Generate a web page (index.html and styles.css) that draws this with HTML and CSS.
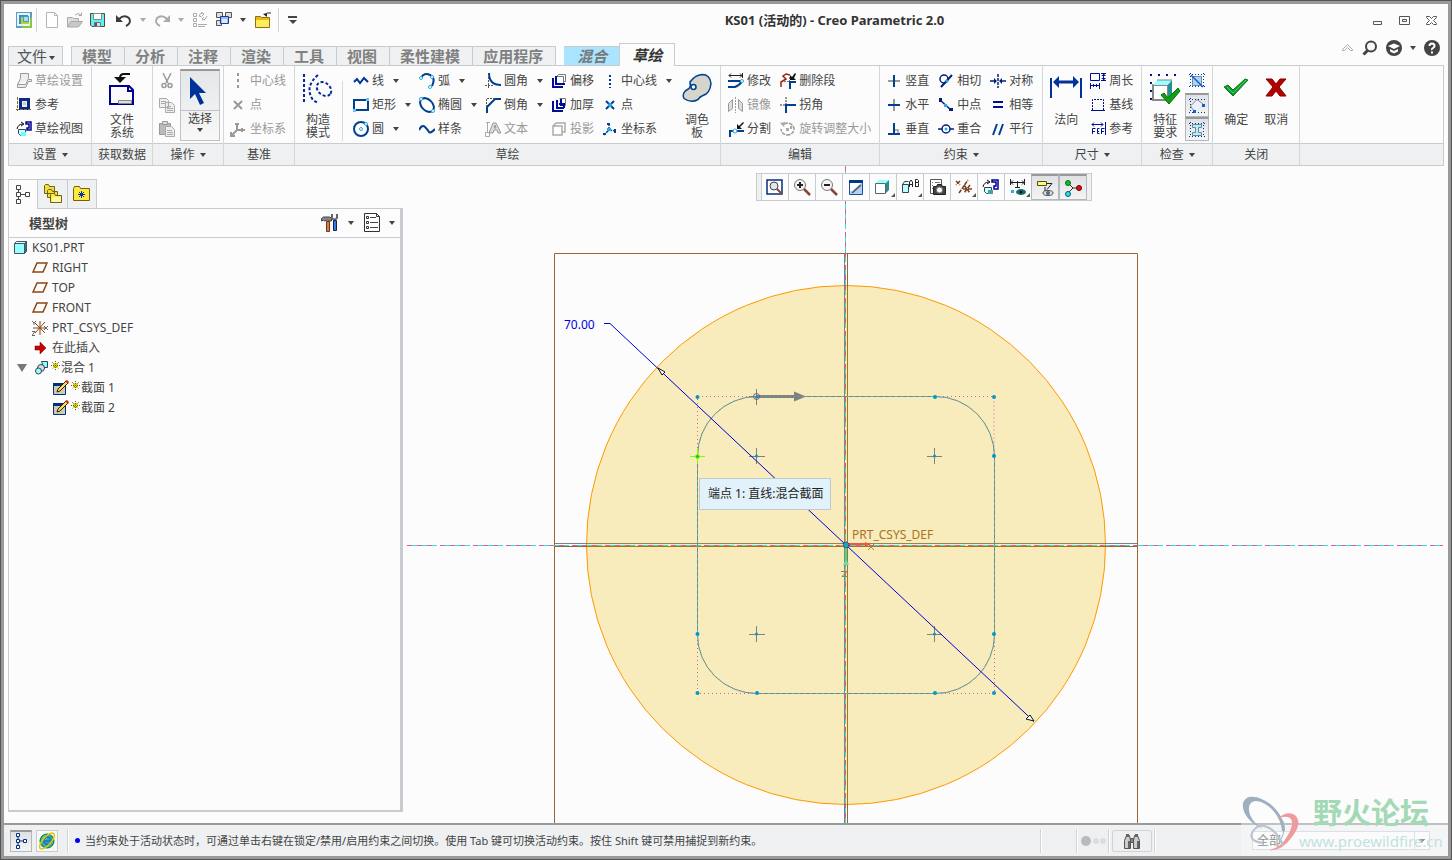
FILE: index.html
```html
<!DOCTYPE html>
<html lang="zh-CN">
<head>
<meta charset="utf-8">
<title>KS01 (活动的) - Creo Parametric 2.0</title>
<link rel="stylesheet" href="styles.css">
</head>
<body>
<div class="window">
  <header class="titlebar">
    <div class="quick">
      <svg class="i16" viewBox="0 0 16 16"><path fill="#5b9ac9" d="M0 0h16v11L11 16H0z"/><path fill="#8fc63f" d="M5 16L16 5v11z"/><path fill="#e6f3f8" d="M1 1h13v13H1z"/><path fill="#3c8dc0" d="M3 3h9v2H5v7H3z"/><path fill="#b5d335" d="M5 5h8v7H5z"/><path fill="#4b9ac0" d="M7 4h6v6H7z"/><path fill="#a9dcea" d="M8 5h4v4H8z"/></svg>
      <i class="vsep"></i>
      <button class="q1" aria-label="新建"><svg class="i16" viewBox="0 0 16 16"><path fill="#fff" stroke="#b5b5b5" d="M2.500 .5h8l3 3v12h-11zM10.500 .5v3h3"/></svg></button>
      <button class="q2" aria-label="打开"><svg class="i16" viewBox="0 0 16 16"><path fill="#ddd" stroke="#aaa" d="M.5 15V5.500h5l1 1h5v3"/><path fill="#c8c8c8" stroke="#aaa" d="M.5 15L4 9.500h11.500L11.500 15z"/><path fill="none" stroke="#aaa" d="M8 3q3-3 6 0M14.500 .5v3h-3"/></svg></button>
      <button class="q2" aria-label="保存"><svg class="i16" viewBox="0 0 16 16"><path fill="#5ef3f3" stroke="#4a4a4a" d="M.5 1.500h14v13H2l-1.500-1.500z"/><path fill="#fcfcfc" stroke="#888" d="M3.500 1.500h8v6h-8z"/><path fill="#ddd" stroke="#777" d="M4.500 10.500h6v4h-6z"/><path fill="#555" d="M5 11h2v3H5z"/></svg></button>
      <button class="q3" aria-label="撤消"><svg class="i16" viewBox="0 0 16 16"><path fill="none" stroke="#3c3c3c" stroke-width="2" d="M3 7q5-5 10-1q3 5-3 8"/><path fill="#3c3c3c" d="M0 3v7h7z"/></svg></button>
      <button class="drop light" aria-label="撤消列表"></button>
      <button class="q4" aria-label="重做"><svg class="i16" viewBox="0 0 16 16"><path fill="none" stroke="#aaa" stroke-width="2" d="M13 7q-5-5-10-1q-3 5 3 8"/><path fill="#aaa" d="M16 3v7H9z"/></svg></button>
      <button class="drop light" aria-label="重做列表"></button>
      <button class="q5" aria-label="重新生成"><svg class="i16" viewBox="0 0 16 16"><path fill="none" stroke="#aaa" d="M.5 1.500h3v3h-3zM.5 6.500h3v3h-3zM.5 11.500h3v3h-3zM5 12.500h9M5 14.500h7M6 4q1-3 4-3M14 4q-1 4-5 4M9 5l-3-1M8 0l3 2-2 2M12 8l-3-1 2-2"/></svg></button>
      <button class="q2" aria-label="窗口"><svg class="i16" viewBox="0 0 16 16"><path fill="#ddd" stroke="#555" d="M.5 .5h6v5h-6zM9.500 .5h6v5h-6zM.5 8.500h5v5h-5z"/><path fill="#9cb9ef" stroke="#143c9c" d="M4.500 4.500h8v7h-8z"/><path fill="#dfeaff" d="M6 7h5v4H6z"/></svg></button>
      <button class="drop dk" aria-label="窗口列表"></button>
      <button class="q5" aria-label="关闭窗口"><svg class="i16" viewBox="0 0 16 16"><path fill="#e8ba19" stroke="#887314" d="M.5 15.500V4.500h5l1 1h8v10z"/><path fill="#ffec5a" d="M1 8h13v7H1z"/><path fill="none" stroke="#222" d="M10 3q2-3 6-2"/><path fill="#222" d="M8 2l4-1v4z"/></svg></button>
      <i class="vsep q2"></i>
      <button class="custom" aria-label="自定义快速访问工具栏"></button>
    </div>
    <h1 class="title">KS01 (活动的) - Creo Parametric 2.0</h1>
    <div class="winbtns">
      <button aria-label="最小化"><svg width="11" height="11"><path fill="none" stroke="#555" d="M1.500 6.500h8v3h-8z"/></svg></button>
      <button aria-label="还原"><svg width="11" height="11"><path fill="none" stroke="#555" d="M.5 1.500h10v8h-10zM3.500 4.500h4v2h-4z"/></svg></button>
      <button aria-label="关闭"><svg width="11" height="11"><path fill="#fff" stroke="#555" d="M.5 1.500h3l2 2 2-2h3v1l-3 3 3 3v1h-3l-2-2-2 2h-3v-1l3-3-3-3z"/></svg></button>
    </div>
  </header>

  <nav class="tabs">
    <button class="tab file">文件<span class="tri"></span></button>
    <div class="tabset"><button class="tab">模型</button><button class="tab">分析</button><button class="tab">注释</button><button class="tab">渲染</button><button class="tab">工具</button><button class="tab">视图</button><button class="tab">柔性建模</button><button class="tab">应用程序</button></div>
    <button class="tab ctx">混合</button><button class="tab active">草绘</button>
    <div class="help">
      <button aria-label="最小化功能区"><svg width="12" height="8"><path fill="none" stroke="#aaa" d="M.5 5.500l5-5 5 5v1h-2l-3-3-3 3h-2z"/></svg></button>
      <button aria-label="搜索"><svg width="16" height="16"><circle cx="9" cy="6.500" r="5" fill="#f4fafc" stroke="#444" stroke-width="2"/><path stroke="#444" stroke-width="3" d="M5.500 10.500L1.500 14.500"/></svg></button>
      <button aria-label="学习"><svg width="16" height="16"><circle cx="8" cy="8" r="8" fill="#444"/><path fill="#fff" d="M2 6l6-2.500L14 6 8 9z"/><path fill="#fff" d="M4 9l4 2 4-2v2.500l-4 2-4-2z"/></svg></button>
      <button class="drop" aria-label="学习列表"></button>
      <button aria-label="帮助"><svg width="16" height="16"><circle cx="8" cy="8" r="8" fill="#444"/><path fill="none" stroke="#fff" stroke-width="2" d="M5.500 6q0-2.500 2.500-2.500T10.500 6Q10.500 7 9 8t-1 2M8 11.500v2"/></svg></button>
    </div>
  </nav>

  <section class="ribbon">
    <div class="group setup">
      <div class="body">
        <div class="col">
          <button class="cmd" disabled><svg class="i16" viewBox="0 0 16 16"><path fill="#eee" stroke="#999" d="M4.500 .5h8v5l-3 6h-8l3-6zM1.500 11.500v3h8l3-6h3v-2h-3"/></svg>草绘设置</button>
          <button class="cmd"><svg class="i16" viewBox="0 0 16 16"><path fill="#0c2a80" d="M3 1h11v12H3z"/><path fill="#eef" d="M6 4h5v6H6z"/><path fill="#b8d8d0" d="M7 5h3v3H7z"/><path stroke="#77713f" stroke-dasharray="3 1" d="M1.500 0v14M0 12.500h15"/></svg>参考</button>
          <button class="cmd"><svg class="i16" viewBox="0 0 16 16"><path fill="#c9ffff" stroke="#345" d="M2.500 8.500h7v6h-5l-2-2z"/><path fill="#6ff" d="M5 11h5v4H5z"/><path fill="none" stroke="#111" d="M1 8Q2 3 7 3M5 1l3 2-3 2"/><path fill="none" stroke="#000090" stroke-width="1.500" d="M10 1h5v8h-4V7h2V3h-3z"/></svg>草绘视图</button>
        </div>
      </div>
      <button class="gname">设置<span class="tri"></span></button>
    </div>
    <div class="group data">
      <div class="body">
        <button class="big"><svg width="28" height="34" viewBox="0 0 28 34"><path fill="none" stroke="#111" stroke-width="2" d="M22 2h-6q-4 0-4 4"/><path fill="#111" d="M6 5h12l-6 6z"/><path fill="#fafafa" stroke="#000090" stroke-width="2" d="M2 14h19l4 4v14H2zM20 14v5h5"/><path fill="#ddd" stroke="#888" d="M10.500 28.500h13v3h-13z"/></svg><span>文件<br>系统</span></button>
      </div>
      <div class="gname">获取数据</div>
    </div>
    <div class="group ops">
      <div class="body">
        <div class="col">
          <button class="cmd" disabled aria-label="剪切"><svg class="i16" viewBox="0 0 16 16"><path fill="none" stroke="#999" stroke-width="1.500" d="M4 0l5 10M12 0L7 10"/><circle cx="5" cy="12.500" r="2" fill="none" stroke="#999" stroke-width="1.500"/><circle cx="11" cy="12.500" r="2" fill="none" stroke="#999" stroke-width="1.500"/></svg></button>
          <button class="cmd" disabled aria-label="复制"><svg class="i16" viewBox="0 0 16 16"><path fill="#eee" stroke="#aaa" d="M.5 1.500h7l2 2v7h-9zM6.500 5.500h6l3 3v7h-9z"/><path stroke="#aaa" d="M2 4.500h5M2 6.500h4M8 9.500h4M8 11.500h6M8 13.500h6"/></svg></button>
          <button class="cmd" disabled aria-label="粘贴"><svg class="i16" viewBox="0 0 16 16"><path fill="#bbb" stroke="#999" d="M.5 2.500h11v11h-11z"/><path fill="#ddd" stroke="#999" d="M3.500 .5h5v3h-5z"/><path fill="#eee" stroke="#aaa" d="M6.500 5.500h6l3 3v7h-9z"/><path stroke="#aaa" d="M8 9.500h5M8 11.500h6M8 13.500h6"/></svg></button>
        </div>
        <div class="split"><button class="pick" aria-label="选择"><svg width="20" height="32" viewBox="0 0 20 32"><path fill="#003399" d="M2 2v22l5-5 5 11 4-2-5-10h7z"/></svg></button><button class="pickname">选择<span class="tri"></span></button></div>
      </div>
      <button class="gname">操作<span class="tri"></span></button>
    </div>
    <div class="group datum">
      <div class="body">
        <div class="col">
          <button class="cmd wide" disabled><svg class="i16" viewBox="0 0 16 16"><path stroke="#999" stroke-width="2" stroke-dasharray="3 3" d="M8 0v16"/></svg>中心线</button>
          <button class="cmd wide" disabled><svg class="i16" viewBox="0 0 16 16"><path stroke="#999" stroke-width="2" d="M4 4l8 8M12 4l-8 8"/></svg>点</button>
          <button class="cmd wide" disabled><svg class="i16" viewBox="0 0 16 16"><path fill="none" stroke="#999" stroke-width="2" d="M7 2v7l-6 6M7 9h8M5 3h4M12 7v4M1 11v4h4"/></svg>坐标系</button>
        </div>
      </div>
      <div class="gname">基准</div>
    </div>
    <div class="group sketch">
      <div class="body">
        <button class="big"><svg width="32" height="32" viewBox="0 0 32 32"><g fill="none" stroke="#002b98" stroke-width="2" stroke-dasharray="3 2"><path d="M2 1v30"/><path d="M16 2Q2 14 11 27l5 3"/><ellipse cx="22" cy="16" rx="8" ry="6" transform="rotate(40 22 16)"/></g></svg><span>构造<br>模式</span></button>
        <i class="bsep"></i>
        <div class="col">
          <div class="row"><button class="cmd"><svg class="i16" viewBox="0 0 16 16"><path fill="none" stroke="#003399" stroke-width="2" d="M1 9l3-3 3 4 4-5 4 4"/></svg>线</button><button class="drop" aria-label="线列表"></button></div>
          <div class="row"><button class="cmd"><svg class="i16" viewBox="0 0 16 16"><path fill="#fff" stroke="#003f92" stroke-width="2" d="M1 3h14v10H1z"/><path fill="#5fc8f5" d="M13 1h3v3h-3zM0 12h3v3H0z"/></svg>矩形</button><button class="drop" aria-label="矩形列表"></button></div>
          <div class="row"><button class="cmd"><svg class="i16" viewBox="0 0 16 16"><circle cx="8" cy="8" r="7" fill="#fff" stroke="#003f92" stroke-width="2"/><circle cx="8" cy="8" r="1.500" fill="none" stroke="#29abe2"/><circle cx="13" cy="3" r="1.500" fill="#fff" stroke="#29abe2"/></svg>圆</button><button class="drop" aria-label="圆列表"></button></div>
        </div>
        <div class="col">
          <div class="row"><button class="cmd"><svg class="i16" viewBox="0 0 16 16"><path fill="none" stroke="#003f92" stroke-width="2" d="M2 5Q5 -1 11 2t2 11"/><g fill="#fff" stroke="#29abe2"><circle cx="2" cy="5" r="1.500"/><circle cx="13" cy="4" r="1.500"/><circle cx="11" cy="14" r="1.500"/></g></svg>弧</button><button class="drop" aria-label="弧列表"></button></div>
          <div class="row"><button class="cmd"><svg class="i16" viewBox="0 0 16 16"><ellipse cx="8" cy="8" rx="8" ry="5.500" transform="rotate(45 8 8)" fill="#fff" stroke="#003f92" stroke-width="2"/><g fill="#fff" stroke="#29abe2"><circle cx="2" cy="2" r="1.500"/><circle cx="14" cy="14" r="1.500"/></g></svg>椭圆</button><button class="drop" aria-label="椭圆列表"></button></div>
          <div class="row"><button class="cmd"><svg class="i16" viewBox="0 0 16 16"><path fill="none" stroke="#003f92" stroke-width="2" d="M0 9q3-6 6-3t4 5 6-3"/></svg>样条</button></div>
        </div>
        <div class="col">
          <div class="row"><button class="cmd"><svg class="i16" viewBox="0 0 16 16"><path fill="none" stroke="#003f92" stroke-width="2" d="M4 0Q4 12 16 12"/><path fill="none" stroke="#555" stroke-dasharray="2 1" d="M3.500 4v12M0 12.500h8"/></svg>圆角</button><button class="drop" aria-label="圆角列表"></button></div>
          <div class="row"><button class="cmd"><svg class="i16" viewBox="0 0 16 16"><path fill="none" stroke="#003f92" stroke-width="2" d="M2 16V10L10 2h6"/><path fill="none" stroke="#555" stroke-dasharray="2 1" d="M1.500 10V1.500H10"/></svg>倒角</button><button class="drop" aria-label="倒角列表"></button></div>
          <div class="row"><button class="cmd" disabled><svg class="i16" viewBox="0 0 16 16"><path fill="none" stroke="#aaa" d="M2.500 1v10M1 1.500h4M.5 11.500h4v4h-4z"/><path fill="#ddd" stroke="#999" d="M4 12l4-10h3l5 10h-3l-1-3H9l-1 3zM9 7h2l-1-3z"/></svg>文本</button></div>
        </div>
        <div class="col">
          <button class="cmd"><svg class="i16" viewBox="0 0 16 16"><path fill="none" stroke="#777" d="M5.500 3.500h7v7h-7zM7.500 1.500h7v7h-2M5.500 3.500l2-2"/><path fill="none" stroke="#000e94" stroke-width="2" d="M2 5v9h10M5 3v8h9"/></svg>偏移</button>
          <button class="cmd"><svg class="i16" viewBox="0 0 16 16"><path fill="none" stroke="#777" d="M8.500 1.500h6v7h-2"/><path fill="none" stroke="#000e94" stroke-width="2" d="M2 4v10h10M6 3v8h7M10 2v6h4M8 7h5v4"/></svg>加厚</button>
          <button class="cmd" disabled><svg class="i16" viewBox="0 0 16 16"><path fill="#fff" stroke="#aaa" stroke-width="1.500" d="M2 5h9v9H2zM5 2h9v9h-3M2 5l3-3"/></svg>投影</button>
        </div>
        <div class="col">
          <div class="row"><button class="cmd"><svg class="i16" viewBox="0 0 16 16"><path stroke="#003399" stroke-width="2" stroke-dasharray="2 2" d="M8 2v13"/></svg>中心线</button><button class="drop" aria-label="中心线列表"></button></div>
          <button class="cmd"><svg class="i16" viewBox="0 0 16 16"><path stroke="#003f92" stroke-width="2" d="M4 4l8 8M12 4l-8 8"/><circle cx="8" cy="8" r="2" fill="#29abe2"/></svg>点</button>
          <button class="cmd"><svg class="i16" viewBox="0 0 16 16"><path fill="none" stroke="#003f92" stroke-width="1.500" stroke-dasharray="3 1" d="M7 2v7l-5 5M7 9l7 1"/><path fill="#29abe2" d="M5 7h4v3H5z"/><path fill="#003f92" d="M5 2h3v2H5zM12 8h2v4h-2zM1 12h3v2H1z"/></svg>坐标系</button>
        </div>
        <button class="big palette"><svg width="32" height="32" viewBox="0 0 32 32"><path fill="#d6d5cb" stroke="#003f92" stroke-width="1.500" d="M9 9Q14 2 21 1.500q8 0 9 9-1 10-8 12-3 1-5 4-7 4-14-1-3-6 5-10 2-2 1-6z"/><circle cx="12.500" cy="14" r="2.500" fill="#fff" stroke="#003f92" stroke-width="1.500"/></svg><span>调色<br>板</span></button>
      </div>
      <div class="gname">草绘</div>
    </div>
    <div class="group edit">
      <div class="body">
        <div class="col">
          <button class="cmd"><svg class="i16" viewBox="0 0 16 16"><path fill="none" stroke="#222" d="M1 2.500h13M3 .5L1 2.500l2 2M14.500 0v5M12 .5l2 2-2 2"/><path fill="none" stroke="#003f92" stroke-width="2" d="M0 8h14M0 14h7q5-2 7-6"/><circle cx="14" cy="8" r="1.500" fill="#fff" stroke="#29abe2"/></svg>修改</button>
          <button class="cmd" disabled><svg class="i16" viewBox="0 0 16 16"><path fill="#ddd" stroke="#999" d="M.5 14.500V6.500l4-4v9zM14.500 14.500V6.500l-4-4v9z"/><path stroke="#999" stroke-dasharray="2 1" d="M7.500 0v16"/></svg>镜像</button>
          <button class="cmd"><svg class="i16" viewBox="0 0 16 16"><path fill="none" stroke="#003f92" stroke-width="2" d="M2 16V10h14"/><circle cx="7" cy="10" r="2" fill="#fff" stroke="#29abe2"/><path fill="#111" d="M9 8V3l2 2 4-4 1 1-4 4 2 2z"/></svg>分割</button>
        </div>
        <div class="col">
          <button class="cmd"><svg class="i16" viewBox="0 0 16 16"><path fill="none" stroke="#a02010" stroke-width="1.500" d="M1 14V9l5-3L3 3l3-2 4 1"/><path fill="none" stroke="#777" stroke-dasharray="2 1" d="M4 8.500h5M9.500 4v5"/><path fill="none" stroke="#003f92" stroke-width="2" d="M10 16V9h6"/><path fill="#111" d="M10 7V2l2 2 3-4 1 1-2 4 2 2z"/></svg>删除段</button>
          <button class="cmd"><svg class="i16" viewBox="0 0 16 16"><path fill="none" stroke="#777" stroke-dasharray="2 1" stroke-width="1.500" d="M0 8h6M6 0v8"/><path fill="none" stroke="#003f92" stroke-width="2" d="M6 16V8h10"/></svg>拐角</button>
          <button class="cmd" disabled><svg class="i16" viewBox="0 0 16 16"><path fill="none" stroke="#999" stroke-width="1.500" stroke-dasharray="4 1" d="M4 3q7-3 10 4 0 6-6 7-6 0-7-6"/><path fill="#aaa" d="M0 2l5-1-1 5zM6 7h3v3H6zM10 5h2v3h-2z"/></svg>旋转调整大小</button>
        </div>
      </div>
      <div class="gname">编辑</div>
    </div>
    <div class="group cons">
      <div class="body">
        <div class="col">
          <button class="cmd"><svg class="i16" viewBox="0 0 16 16"><path stroke="#999" stroke-width="2" d="M2 8h12"/><path stroke="#003f92" stroke-width="2" d="M8 2v12"/></svg>竖直</button>
          <button class="cmd"><svg class="i16" viewBox="0 0 16 16"><path stroke="#999" stroke-width="2" d="M8 2v12"/><path stroke="#003f92" stroke-width="2" d="M2 8h12"/></svg>水平</button>
          <button class="cmd"><svg class="i16" viewBox="0 0 16 16"><path fill="none" stroke="#999" stroke-width="1.500" d="M8 9h4v4"/><path stroke="#003f92" stroke-width="2" d="M2 13h12M8 2v11"/></svg>垂直</button>
        </div>
        <div class="col">
          <button class="cmd"><svg class="i16" viewBox="0 0 16 16"><circle cx="6" cy="6" r="4" fill="#fff" stroke="#001f7c" stroke-width="1.500"/><path stroke="#001f7c" stroke-width="2" d="M14 2L3 14"/><circle cx="9" cy="8" r="1.500" fill="#29abe2"/></svg>相切</button>
          <button class="cmd"><svg class="i16" viewBox="0 0 16 16"><path stroke="#001f7c" stroke-width="1.500" d="M2 3l11 10"/><path fill="#001f7c" d="M1 1h3v4H1zM11 11h4v3h-4z"/><path fill="#29abe2" d="M6 7h3v3H6z"/></svg>中点</button>
          <button class="cmd"><svg class="i16" viewBox="0 0 16 16"><path stroke="#001f7c" stroke-width="1.500" d="M0 8h16"/><circle cx="8" cy="8" r="4" fill="#fff" stroke="#001f7c" stroke-width="1.500"/><circle cx="8" cy="8" r="1.500" fill="#29abe2"/></svg>重合</button>
        </div>
        <div class="col">
          <button class="cmd"><svg class="i16" viewBox="0 0 16 16"><path stroke="#001f7c" stroke-width="1.500" stroke-dasharray="3 1" d="M8 1v14"/><path stroke="#001f7c" stroke-width="1.500" d="M0 8h6M10 8h6"/><path fill="#001f7c" d="M4 5l3 3-3 3zM12 5L9 8l3 3z"/></svg>对称</button>
          <button class="cmd"><svg class="i16" viewBox="0 0 16 16"><path stroke="#000e94" stroke-width="2" d="M3 5h10M3 10h10"/></svg>相等</button>
          <button class="cmd"><svg class="i16" viewBox="0 0 16 16"><path stroke="#003f92" stroke-width="2" d="M7 3L3 14M13 3L9 14"/></svg>平行</button>
        </div>
      </div>
      <button class="gname">约束<span class="tri"></span></button>
    </div>
    <div class="group dims">
      <div class="body">
        <button class="big"><svg width="32" height="32" viewBox="0 0 32 32"><path stroke="#003399" stroke-width="2" d="M1 5v20M31 5v20"/><path stroke="#003399" stroke-width="3" d="M6 9h20"/><path fill="#003399" d="M3 9l6-6v12zM29 9l-6-6v12z"/></svg><span>法向</span></button>
        <div class="col">
          <button class="cmd"><svg class="i16" viewBox="0 0 16 16"><path fill="none" stroke="#000e94" d="M.5 .5h9v7h-9zM.5 10v6M9.500 10v6M1 12.500h8M3.500 11v3M6.500 11v3M11 .5h5M11 7.500h5M13.500 1v6"/><path fill="#000e94" d="M11 3h5l-2-2zM11 5h5l-2 2z"/></svg>周长</button>
          <button class="cmd"><svg class="i16" viewBox="0 0 16 16"><path fill="none" stroke="#000e94" stroke-dasharray="2 1" d="M2.500 13V2.500h11V13"/><path stroke="#000e94" d="M1 13.500h14"/></svg>基线</button>
          <button class="cmd"><svg class="i16" viewBox="0 0 16 16"><path fill="none" stroke="#000e94" d="M2 3.500h11M4 1.500l-2 2 2 2M11 1.500l2 2-2 2M15.500 1v13M2.500 13V7.500h3M2 10.500h3M9.500 7.500h-2v5h2M7 10.500h2M11.500 13V7.500h3M11 10.500h3"/></svg>参考</button>
        </div>
      </div>
      <button class="gname">尺寸<span class="tri"></span></button>
    </div>
    <div class="group inspect">
      <div class="body">
        <button class="big"><svg width="32" height="32" viewBox="0 0 32 32"><path stroke="#000e94" stroke-width="2" stroke-dasharray="2 6" d="M1 2h30M2 9v22"/><path fill="#fff" stroke="#888" stroke-width="2" d="M4 12h15v15H4z"/><path fill="#9ff" d="M4 12l4-5h15l-4 5z"/><path fill="#288f8f" d="M19 12l4-5v14l-4 5z"/><path fill="none" stroke="#888" d="M8 7h15"/><path fill="#0da010" stroke="#087008" d="M12 22l3-2 4 5 10-10 2 3-11 13z"/></svg><span>特征<br>要求</span></button>
        <div class="toggles">
          <button aria-label="着色封闭环"><svg class="i16" viewBox="0 0 16 16"><path stroke="#003399" stroke-dasharray="1 2" d="M0 1.500h16M0 13.500h16M1.500 0v14M14.500 0v14"/><path fill="#a9d6f7" stroke="#789" d="M3.500 3.500h9v9h-9z"/><path stroke="#0c60d8" stroke-width="1.500" d="M2 2l12 12"/></svg></button>
          <button class="on" aria-label="突出显示开放端"><svg class="i16" viewBox="0 0 16 16"><path stroke="#003399" stroke-dasharray="1 2" d="M0 1.500h16M0 14.500h16M1.500 0v14"/><path fill="#eef" stroke="#888" d="M5 13L1.500 8 8 1.500 14 6"/><path fill="#0c60d8" d="M4 12h3v3H4zM13 6h3v3h-3z"/></svg></button>
          <button class="on" aria-label="重叠几何"><svg class="i16" viewBox="0 0 16 16"><path stroke="#003399" stroke-dasharray="1 2" d="M0 1.500h16M0 14.500h16M1.500 0v14M14.500 0v14"/><path fill="#b5eef4" stroke="#689" d="M3.500 2.500h9v3h-3v5h3v3h-9v-3h3v-5h-3z"/></svg></button>
        </div>
      </div>
      <button class="gname">检查<span class="tri"></span></button>
    </div>
    <div class="group close">
      <div class="body">
        <button class="big"><svg width="28" height="32" viewBox="0 0 28 32"><path fill="#0b9a2c" stroke="#087a20" d="M2 14l4-2 5 5L23 6l3 1-15 16z"/><path stroke="#52d35a" d="M5 14l6 6L24 7" fill="none"/></svg><span>确定</span></button>
        <button class="big"><svg width="28" height="32" viewBox="0 0 28 32"><path fill="#b30000" stroke="#800" d="M4 6h6l4 5 4-5h6l-7 8 7 9h-6l-4-5-4 5H4l7-9z"/></svg><span>取消</span></button>
      </div>
      <div class="gname">关闭</div>
    </div>
    <div class="group rest"><div class="body"></div><div class="gname"></div></div>
  </section>

  <main class="work">
    <aside class="side">
      <div class="sidetabs">
        <button class="on" aria-label="模型树"><svg width="16" height="20" viewBox="0 0 16 20"><path fill="#fff" stroke="#444" d="M1.500 .5h4v4h-4zM1.500 7.500h4v4h-4zM10.500 7.500h4v4h-4zM1.500 14.500h4v4h-4zM3.500 5v2M3.500 12v2M6 9.500h4"/></svg></button>
        <button aria-label="文件夹浏览器"><svg width="20" height="20" viewBox="0 0 20 20"><g stroke="#6d6216"><path fill="#f3dd3a" d="M1.500 9.500v-8l1-1h3l1 2h5v7zM4.500 13.500v-7l1-1h3l1 2h5v6z"/><path fill="#ffe93b" d="M7.500 18.500v-8l1-1h3l1 2h6v7z"/></g><path fill="#fff9a5" d="M9 13h9v5H9z"/></svg></button>
        <button aria-label="收藏夹"><svg width="18" height="18" viewBox="0 0 18 18"><path fill="#ffe93b" stroke="#6d6216" d="M.5 15.500V3.500l1-2h5l1 2h9v12z"/><path stroke="#0c2cb0" d="M8.500 6v7M5 9.500h7M6 7l5 5M11 7l-5 5"/></svg></button>
      </div>
      <div class="panel">
        <div class="phead">
          <h2>模型树</h2>
          <button aria-label="设置"><svg width="20" height="20" viewBox="0 0 20 20"><path fill="#888" stroke="#444" d="M1.500 8V5.500l2-1.500h6l2 1v3h-3l-1-1-3 1-1-1z"/><path fill="#d08040" stroke="#732" d="M6.500 8.500h3v10h-3z"/><path fill="none" stroke="#666" stroke-width="2" d="M12 1v4q2 3 5 0V1"/><path fill="#3a76e8" stroke="#124" d="M13.500 7.500h3v10h-3z"/></svg></button><span class="tri"></span>
          <button aria-label="显示"><svg width="17" height="20" viewBox="0 0 17 20"><path fill="#fff" stroke="#333" d="M.5 .5h12l3 3v15H.5zM12.500 .5v3h3"/><path stroke="#444" d="M6 4.500h6M6 9.500h8M6 14.500h8"/><path fill="none" stroke="#333" d="M2.500 3.500h2v2h-2zM2.500 8.500h2v2h-2zM2.500 13.500h2v2h-2z"/></svg></button><span class="tri"></span>
        </div>
        <ul class="tree">
          <li><svg width="14" height="14" viewBox="0 0 14 14"><path fill="#9ff" stroke="#456" d="M.5 2.500h10v10H.5z"/><path fill="#dff" stroke="#456" d="M.5 2.500l2-2h10l-2 2z"/><path fill="#2b7c80" stroke="#456" d="M10.500 2.500l2-2v10l-2 2z"/></svg>KS01.PRT</li>
          <li class="l1"><svg width="16" height="14" viewBox="0 0 16 14"><path fill="none" stroke="#8b4513" stroke-width="1.500" d="M5 2h10l-4 9H1z"/></svg>RIGHT</li>
          <li class="l1"><svg width="16" height="14" viewBox="0 0 16 14"><path fill="none" stroke="#8b4513" stroke-width="1.500" d="M5 2h10l-4 9H1z"/></svg>TOP</li>
          <li class="l1"><svg width="16" height="14" viewBox="0 0 16 14"><path fill="none" stroke="#8b4513" stroke-width="1.500" d="M5 2h10l-4 9H1z"/></svg>FRONT</li>
          <li class="l1"><svg width="16" height="16" viewBox="0 0 16 16"><path stroke="#8b4513" d="M8 1v14M3 3l10 10M13 2L3 13M1 8h12"/><path fill="none" stroke="#666" d="M0 1l2 2 2-2M2 3v2M0 11.500h3l-3 4h3M12 6l4 4M16 6l-4 4"/></svg>PRT_CSYS_DEF</li>
          <li class="l1"><svg width="16" height="14" viewBox="0 0 16 14"><path fill="#d00000" stroke="#600" stroke-width=".5" d="M3 5h5V1l6 6-6 6V9H3z"/></svg>在此插入</li>
          <li class="l0"><span class="twisty"></span><svg width="16" height="16" viewBox="0 0 16 16"><g stroke="#345"><path fill="#8ff" d="M7.500 1.500h6v6h-4z"/><circle cx="7" cy="8" r="3.500" fill="#ddd"/><circle cx="4.500" cy="11" r="3" fill="#9ff"/></g></svg><svg class="star" width="10" height="12" viewBox="0 0 10 12"><path stroke="#e8dc00" stroke-width="3" d="M4.500 2v5M2 4.500h5"/><path stroke="#665f10" stroke-dasharray="1 1" d="M4.500 0v9M0 4.500h9M1 1l7 7M8 1L1 8"/></svg>混合 1</li>
          <li class="l2"><svg width="17" height="16" viewBox="0 0 17 16"><path fill="#d0ccb4" stroke="#003080" d="M.5 3.500h12v11H.5z"/><path fill="#003080" d="M0 3h13v3H0z"/><path fill="#ffd94a" stroke="#222" d="M4 12l1-3 8-8 2 2-8 8z"/><path fill="#c22" d="M12 1l2-1 2 2-1 2z"/></svg><svg class="star" width="10" height="12" viewBox="0 0 10 12"><path stroke="#e8dc00" stroke-width="3" d="M4.500 2v5M2 4.500h5"/><path stroke="#665f10" stroke-dasharray="1 1" d="M4.500 0v9M0 4.500h9M1 1l7 7M8 1L1 8"/></svg>截面 1</li>
          <li class="l2"><svg width="17" height="16" viewBox="0 0 17 16"><path fill="#d0ccb4" stroke="#003080" d="M.5 3.500h12v11H.5z"/><path fill="#003080" d="M0 3h13v3H0z"/><path fill="#ffd94a" stroke="#222" d="M4 12l1-3 8-8 2 2-8 8z"/><path fill="#c22" d="M12 1l2-1 2 2-1 2z"/></svg><svg class="star" width="10" height="12" viewBox="0 0 10 12"><path stroke="#e8dc00" stroke-width="3" d="M4.500 2v5M2 4.500h5"/><path stroke="#665f10" stroke-dasharray="1 1" d="M4.500 0v9M0 4.500h9M1 1l7 7M8 1L1 8"/></svg>截面 2</li>
        </ul>
      </div>
    </aside>

    <section class="canvas">
      <svg class="drawing" width="100%" height="100%">
        <g transform="translate(-403 -166)" fill="none">
          <path stroke="#996633" d="M554.500 900V253.500h583V900"/>
          <circle cx="846" cy="545" r="259.500" fill="#f8ebbc" stroke="#ff9900"/>
          <path stroke="#808080" d="M844.500 254v570M555 543.500h582"/>
          <path stroke="#996633" d="M847.500 254v570M555 546.500h582"/>
          <path stroke="#93875a" d="M844.500 286v518M587 543.500h518"/>
          <path stroke="#a87320" d="M847.500 286v518M587 546.500h518"/>
          <path stroke="#cc6699" stroke-dasharray="5 5 5 5 5 8" d="M845.500 166v658M407 545.500h1036"/>
          <path stroke="#33e0dd" stroke-dasharray="5 5 5 5 5 8" stroke-dashoffset="-5" d="M845.500 166v658M407 545.500h1036"/>
          <path stroke="#cc6699" stroke-dasharray="1 3" d="M697.500 456v-59.500h59M935 396.500h59V456M994.500 634v59.500H935M757 693.500h-59.500V634"/>
          <path stroke="#808080" d="M757 396.500h178a59 60 0 0 1 59.500 60v178a59 59 0 0 1-59.500 59H757a59.500 59 0 0 1-59.500-59v-178a59.500 60 0 0 1 59.500-60z"/>
          <path stroke="#33cccc" stroke-dasharray="2 4" d="M757 396.500h178a59 60 0 0 1 59.500 60v178a59 59 0 0 1-59.500 59H757a59.500 59 0 0 1-59.500-59v-178a59.500 60 0 0 1 59.500-60z"/>
          <path stroke="#808080" d="M756.500 389v16M749 396.500h16M756.500 448v16M749 456.500h16M934.500 448v16M927 456.500h15M934.500 626v16M927 634.500h15M756.500 626v16M749 634.500h16"/>
          <path stroke="#808080" stroke-width="3" d="M757 396.500h38"/><path fill="#808080" d="M794 391.500l12 5-12 5z"/>
          <path stroke="#33cccc" stroke-dasharray="1 3" d="M762 396.500h44"/>
          <circle cx="756.500" cy="396.500" r="3" stroke="#667"/>
          <g fill="#0099cc"><circle cx="697.500" cy="397" r="2"/><circle cx="756.500" cy="397" r="1.500"/><circle cx="935" cy="397" r="2"/><circle cx="994" cy="397" r="2"/><circle cx="994" cy="456" r="2"/><circle cx="994" cy="634" r="2"/><circle cx="994" cy="693" r="2"/><circle cx="935" cy="693" r="2"/><circle cx="757" cy="693" r="2"/><circle cx="697.500" cy="693" r="2"/><circle cx="697.500" cy="634" r="2"/><circle cx="756.500" cy="456" r="1.500"/><circle cx="934.500" cy="456" r="1.500"/><circle cx="934.500" cy="634" r="1.500"/><circle cx="756.500" cy="634" r="1.500"/></g>
          <path stroke="#80ff00" d="M690 456.500h15M697.500 449v15"/><circle cx="697.500" cy="456.500" r="2" fill="#29b070" stroke="#80ff00"/>
          <path stroke="#0000dd" d="M604 323.500h6l424 398"/>
          <path stroke="#111" fill="#fff" d="M658 368l7 4-3 3zM1034 721l-4-6-4 4z"/>
          <path stroke="#ff5030" stroke-width="2" d="M848 544h18"/><path fill="#ff5030" d="M865 542l6 2.500-6 2z"/>
          <path stroke="#93875a" d="M868 544l6 6M874 544l-6 6M841 571.500h6l-5 5h6"/>
          <path stroke="#33e0a0" stroke-width="2" d="M846 549v15"/><path fill="#50e8b0" d="M843 565l3-6 3 6z"/>
          <circle cx="846" cy="545" r="3" fill="#18a8a8" stroke="#0000dd" stroke-dasharray="1 1"/><path stroke="#ff9900" d="M840 545.500h3M845.500 539v3"/>
          <text class="dim" x="564" y="329">70.00</text>
          <text class="csys" x="852" y="539">PRT_CSYS_DEF</text>
        </g>
      </svg>
      <div class="tip">端点 1: 直线:混合截面</div>
      <div class="gtools">
        <button aria-label="重新调整"><svg class="i18" viewBox="0 0 18 18"><path fill="#fff" stroke="#003080" stroke-width="1.500" d="M1 2h15v14H1z"/><circle cx="8" cy="8" r="4" fill="#dfe8ee" stroke="#444"/><path stroke="#843" stroke-width="2" d="M11 11l5 5"/></svg></button>
        <button aria-label="放大"><svg class="i18" viewBox="0 0 18 18"><circle cx="7" cy="7" r="5.500" fill="#f4f4f4" stroke="#777"/><path stroke="#222" stroke-width="2" d="M4 7h6M7 4v6"/><path stroke="#843" stroke-width="2.500" d="M11 11l6 6"/></svg></button>
        <button aria-label="缩小"><svg class="i18" viewBox="0 0 18 18"><circle cx="7" cy="7" r="5.500" fill="#f4f4f4" stroke="#777"/><path stroke="#222" stroke-width="2" d="M4 7h6"/><path stroke="#843" stroke-width="2.500" d="M11 11l6 6"/></svg></button>
        <button aria-label="重画"><svg class="i18" viewBox="0 0 18 18"><path fill="#b5cff0" stroke="#1c4f93" d="M2.500 2.500h13v14h-13z"/><path fill="#003a80" d="M2 2h14v3H2z"/><path fill="#fff" d="M3 5h11l-9 8H3z"/><path stroke="#456" stroke-width="1.500" d="M5 15l9-8"/></svg></button>
        <button class="more" aria-label="显示样式"><svg class="i18" viewBox="0 0 18 18"><path fill="#fff" stroke="#567" d="M1.500 5.500h10v10h-10z"/><path fill="#9ff" d="M2 5l3-3h11l-4 3z"/><path fill="#2b8c90" d="M12 5l3-3v10l-3 3z"/></svg></button>
        <button class="more" aria-label="已保存方向"><svg class="i18" viewBox="0 0 18 18"><path fill="#bff" stroke="#345" d="M1.500 6.500h6v8h-6zM1.500 6.500l2-3h4"/><path fill="none" stroke="#222" d="M8.500 9V4l1.500-2 1.500 2v5M8.500 6.500h3M14.500 9V1.500h2l1 1v2h-3h2l1 1v3h-3"/></svg></button>
        <button aria-label="视图管理器"><svg class="i18" viewBox="0 0 18 18"><path fill="#fff" stroke="#555" d="M2.500 1.500h11v14h-11z"/><path stroke="#777" d="M4 4.500h1M7 4.500h5M4 7.500h1M4 10.500h1"/><path fill="#444" stroke="#222" d="M5.500 8.500h3l1-2h4l1 2h3v8h-12z"/><circle cx="11.500" cy="12" r="3" fill="#fff" stroke="#777"/></svg></button>
        <button class="more" aria-label="基准显示过滤器"><svg class="i18" viewBox="0 0 18 18"><path stroke="#7a3f1d" stroke-width="1.500" d="M1 3l4 4M5 3L1 7M4 15L13 2M9 7l6 8M15 7l-6 8M8 11h9" stroke-dasharray="4 1"/></svg></button>
        <button aria-label="草绘视图"><svg class="i18" viewBox="0 0 18 18"><path fill="#c9ffff" stroke="#345" d="M2.500 9.500h7v6h-5l-2-2z"/><path fill="#48a0a0" d="M6 12h5v4H6z"/><path fill="none" stroke="#111" d="M1 9Q2 4 7 4M5 2l3 2-3 2"/><path fill="none" stroke="#000090" stroke-width="1.500" d="M10 2h6v9h-4V8h2V4h-4z"/></svg></button>
        <button class="more" aria-label="草绘器显示过滤器"><svg class="i18" viewBox="0 0 18 18"><path fill="none" stroke="#222" d="M1.500 1v6M8.500 3v6M15.500 1v6M1 4.500h15M4 2.500l-2 2 2 2M13 2.500l2 2-2 2M6 9.500h5"/><path fill="#29abe2" d="M2 12h3v3H2z"/><ellipse cx="12" cy="14" rx="5" ry="3" fill="#176e70"/><circle cx="12" cy="14" r="1.500" fill="#111"/></svg></button>
        <button class="on" aria-label="注释显示"><svg class="i18" viewBox="0 0 18 18"><path fill="#fff68a" stroke="#554f00" d="M1.500 2.500h9v4h-9z"/><path fill="none" stroke="#222" d="M11 4.500h5l-5 6M9 8v4h3"/><ellipse cx="12" cy="14" rx="5" ry="2.500" fill="#ddd" stroke="#555"/><circle cx="12" cy="14" r="2" fill="#4f6786"/></svg></button>
        <button class="on" aria-label="旋转中心"><svg class="i18" viewBox="0 0 18 18"><path fill="none" stroke="#333" d="M4 4l5 5-5 5M9 9h6"/><circle cx="4" cy="4" r="2.500" fill="#10c010" stroke="#063"/><circle cx="15" cy="9" r="2.500" fill="#e01010" stroke="#600"/><circle cx="4" cy="15" r="2.500" fill="#30d8e8" stroke="#066"/></svg></button>
      </div>
    </section>
  </main>

  <footer class="status">
    <button class="on" aria-label="导航器"><svg class="i16" viewBox="0 0 16 16"><path fill="#fff" stroke="#003080" d="M3.500 .5h3v3h-3zM3.500 6.500h3v3h-3zM10.500 6.500h3v3h-3zM3.500 12.500h3v3h-3zM5 4v2M5 10v2M7 8h3"/></svg></button>
    <button aria-label="浏览器"><svg class="i18" viewBox="0 0 18 18"><circle cx="9" cy="9" r="7" fill="#25b8a0" stroke="#0a6b33"/><path fill="#4fe07a" d="M5 4l6-2-3 6-5 2z"/><path fill="none" stroke="#2877c8" stroke-width="2" d="M6 9h7q-1-4-4-4t-3 4q0 4 6 3"/><ellipse cx="9" cy="9" rx="10" ry="4" transform="rotate(-48 9 9)" fill="none" stroke="#e8c400" stroke-width="1.500"/></svg></button>
    <i class="vsep"></i>
    <p class="msg"><span class="bullet"></span>当约束处于活动状态时，可通过单击右键在锁定/禁用/启用约束之间切换。使用 Tab 键可切换活动约束。按住 Shift 键可禁用捕捉到新约束。</p>
    <div class="tools">
      <i class="vsep"></i><i class="vsep s2"></i>
      <svg width="28" height="14"><circle cx="7" cy="7" r="5" fill="#bbb"/><circle cx="17" cy="7" r="3" fill="#ddd"/><circle cx="24" cy="7" r="3" fill="#ddd"/></svg>
      <i class="vsep"></i>
      <button class="find" aria-label="查找"><svg width="18" height="16" viewBox="0 0 18 16"><g stroke="#555"><path fill="#ccc" d="M1.500 15.500v-8l2-5h3l1 5v8zM10.500 15.500v-8l1-5h3l2 5v8z"/><path fill="#888" d="M7.500 5.500h3v4h-3z"/></g><path fill="#666" d="M3 1h3v3H3zM12 1h3v3h-3zM5 8h2v7H5zM14 8h2v7h-2z"/></svg></button>
      <i class="vsep"></i>
      <select class="filter" aria-label="选择过滤器"><option>全部</option></select>
    </div>
  </footer>

  <div class="brand">
    <svg width="60" height="62" viewBox="0 0 60 62"><path fill="#9db0c0" fill-rule="evenodd" d="M44 38C44 20 24 2 8 4-4 8 2 28 22 36 6 26 4 10 14 8 26 8 40 22 41 38z"/><path fill="none" stroke="#9db0c0" d="M42 28q2 5 0 14l-6 12"/><path fill="#ee9a9e" d="M36 26Q46 17 54 22 62 30 51 44 40 59 28 57 40 55 47 42 54 29 49 25 44 22 36 26z"/><path fill="none" stroke="#b8c4d0" stroke-width="2" d="M22 50Q6 48 12 38 18 30 26 34 36 38 42 52"/></svg>
    <div class="brandtext"><strong>野火论坛</strong><span>www.proewildfire.cn</span></div>
  </div>
</div>
</body>
</html>
```
FILE: styles.css
```css
* { box-sizing: border-box; }
body { margin: 0; }
body, button, select {
  font-family: "Noto Sans", "Noto Sans CJK SC", sans-serif;
  font-size: 12px;
  line-height: 16px;
  color: #444;
}
button { margin: 0; padding: 0; border: 0; background: none; }
svg { display: block; flex: none; }
h1, h2, p, ul { margin: 0; padding: 0; }
.i16 { width: 16px; height: 16px; }
.i18 { width: 18px; height: 18px; }

.window {
  position: relative;
  display: flex;
  flex-direction: column;
  height: 100vh;
  border: 1px solid #555;
  outline: 3px solid #999;
  outline-offset: -4px;
  padding: 3px;
  background: #fcfcfc;
  overflow: hidden;
}
.vsep { width: 2px; height: 24px; background: #d0d2d4; border-right: 1px solid #fff; flex: none; }
.tri, .drop::before, .twisty {
  content: "";
  display: inline-block;
  border: 3px solid transparent;
  border-top: 4px solid #444;
  border-bottom: 0;
}
.drop { display: flex; align-items: center; width: 6px; height: 16px; flex: none; }
.drop.light::before { border-top-color: #aaa; }

/* title bar */
.titlebar { display: flex; align-items: center; height: 32px; flex: none; }
.quick { display: flex; align-items: center; padding-left: 12px; }
.quick > .vsep { margin-left: 4px; }
.q1 { margin-left: 6px; }
.q2, .quick > .vsep.q2 { margin-left: 7px; }
.q3 { margin-left: 10px; }
.q4 { margin-left: 8px; }
.q5 { margin-left: 9px; }
.quick .drop { margin-left: 8px; }
.custom { width: 9px; height: 8px; margin-left: 8px; border-top: 2px solid #444; display: flex; justify-content: center; align-items: flex-end; }
.custom::before { content: ""; border: 4px solid transparent; border-top: 4px solid #444; border-bottom: 0; }
.title { flex: 1; text-align: center; font-size: 13px; font-weight: 700; color: #333; }
.winbtns { display: flex; justify-content: flex-end; gap: 16px; padding-right: 11px; }

/* tabs */
.tabs { display: flex; align-items: flex-end; height: 29px; flex: none; padding-left: 4px; position: relative; z-index: 1; }
.tab {
  height: 19px;
  padding: 0 12px 0 10px;
  font-size: 15px;
  font-weight: 700;
  line-height: 18px;
  color: #808080;
  background: #eef0f2;
  border: 1px solid #c8ccd0;
  border-width: 1px 0 0 1px;
  white-space: nowrap;
}
.file { padding: 0 7px 0 8px; border-right-width: 1px; font-weight: 400; color: #555; margin-right: 8px; }
.file .tri { margin-left: 2px; vertical-align: middle; }
.tabset { display: flex; border-right: 1px solid #c8ccd0; margin-right: 8px; }
.ctx { padding: 0 12px; background: #aae4ff; border-left-color: #aae4ff; font-style: italic; color: #777; }
.active { height: 23px; padding: 0 12px; border-width: 1px 1px 0; background: #fcfcfc; color: #333; font-style: italic; line-height: 22px; margin-bottom: -1px; }
.help { display: flex; align-items: center; gap: 8px; margin-left: auto; padding: 0 8px 9px 0; }

/* ribbon */
.ribbon { display: flex; margin: 0 4px; border: 1px solid #c8ccd0; height: 101px; flex: none; }
.group { display: flex; flex-direction: column; border-right: 1px solid #d4d6d8; flex: none; }
.rest { flex: 1 1 0; border-right: 0; }
.body { flex: 1; display: flex; align-items: flex-start; padding: 3px 7px 0; }
.gname {
  height: 22px;
  width: 100%;
  display: flex;
  align-items: center;
  justify-content: center;
  gap: 5px;
  background: #eef0f2;
  border-top: 1px solid #c8ccd0;
  white-space: nowrap;
}
.col { display: flex; flex-direction: column; flex: none; }
.row, .cmd { display: flex; align-items: center; height: 24px; white-space: nowrap; }
.cmd { gap: 3px; }
.cmd:disabled { color: #999; }
.row .drop { margin-left: 9px; }
.big { display: flex; flex-direction: column; align-items: center; justify-content: flex-start; width: 32px; flex: none; line-height: 13px; padding-top: 2px; gap: 6px; }
.big svg { height: 36px; }
.setup .body { padding-right: 8px; }
.data .body { padding: 3px 14px 0; }
.ops .body { gap: 5px; padding: 3px 3px 0 6px; }
.split { display: flex; flex-direction: column; width: 40px; height: 72px; border: 1px solid #c0c4c8; border-top: 2px solid #999; background: linear-gradient(#e4e6e8, #f8f8f8); }
.pick { display: flex; align-items: center; justify-content: center; height: 40px; border-bottom: 1px solid #c0c4c8; padding-right: 4px; }
.pickname { display: flex; flex-direction: column; align-items: center; flex: 1; gap: 1px; }
.datum .body { padding: 3px 8px 0 6px; }
.cmd.wide { gap: 4px; }
.sketch .body { gap: 8px; }
.sketch .bsep { width: 1px; height: 60px; margin: 12px 2px 0 0; background: #d8dadc; }
.palette { margin-left: 1px; }
.edit .body { gap: 9px; padding-right: 8px; }
.cons .body { gap: 9px; padding: 3px 9px 0 6px; }
.dims .body { gap: 8px; padding-right: 8px; }
.inspect .body { gap: 4px; padding-right: 3px; }
.toggles { display: flex; flex-direction: column; }
.toggles button { width: 24px; height: 24px; display: flex; align-items: center; justify-content: center; }
.on { border: 1px solid #b4b8bc; border-top: 2px solid #999; background: linear-gradient(#dfe1e4, #f4f4f4); }
.close .body { gap: 8px; }

/* workspace */
.work { flex: 1; display: flex; min-height: 0; }
.side { display: flex; flex-direction: column; width: 399px; padding: 13px 0 11px 4px; flex: none; }
.sidetabs { display: flex; position: relative; z-index: 1; }
.sidetabs button { width: 30px; height: 29px; display: flex; align-items: center; justify-content: center; border: 1px solid #c8ccd0; border-width: 1px 0 0 1px; background: #eef0f2; }
.sidetabs button:last-child { width: 30px; border-right-width: 1px; }
.sidetabs .on { width: 29px; height: 30px; margin-bottom: -1px; background: #fcfcfc; }
.panel { flex: 1; border: 1px solid #c8ccd0; border-right-width: 3px; border-bottom-width: 2px; }
.phead { display: flex; align-items: center; height: 29px; padding: 0 4px 0 20px; border-bottom: 1px solid #c8ccd0; }
.phead h2 { flex: 1; font-size: 13px; font-weight: 700; }
.phead .tri { margin: 0 1px 0 8px; }
.phead .tri + button { margin-left: 9px; }
.tree { list-style: none; }
.tree li { display: flex; align-items: center; gap: 4px; height: 20px; padding-left: 5px; color: #444; }
.tree .l1 { padding-left: 23px; }
.tree .l0 { padding-left: 8px; gap: 0; }
.tree .l2 { padding-left: 44px; gap: 0; }
.twisty { border-width: 8px 5px 0; border-top-color: #777; margin-right: 7px; }
.star { margin: 0 0 3px 1px; }

.canvas { flex: 1; position: relative; overflow: hidden; }
.drawing { position: absolute; inset: 0; }
.dim { font-size: 12px; fill: #0000dd; }
.csys { font-size: 12px; fill: #a87320; }
.tip { position: absolute; left: 296px; top: 312px; padding: 7px 6px 7px 8px; border: 1px solid #c0c8d0; background: #e2f2fb; color: #222; white-space: nowrap; }
.gtools { position: absolute; top: 7px; left: 0; right: 3px; width: max-content; margin: 0 auto; display: flex; padding: 0 4px; height: 28px; border: 1px solid #c8ccd0; background: #eef0f2; }
.gtools button { position: relative; width: 27px; height: 26px; display: flex; align-items: center; justify-content: center; border-left: 1px solid #c8ccd0; background: #fcfcfc; }
.gtools .more::after { content: ""; position: absolute; right: 1px; bottom: 3px; border: 2px solid transparent; border-right-color: #555; border-bottom-color: #555; }
.gtools .on { width: 28px; border: 1px solid #b4b8bc; border-top: 2px solid #999; background: linear-gradient(#dfe1e4, #f4f4f4); }

/* status bar */
.status { display: flex; align-items: center; height: 33px; flex: none; padding: 0 18px 0 6px; border-top: 2px solid #999; background: #eef0f2; }
.status > button { width: 22px; height: 22px; display: flex; align-items: center; justify-content: center; margin-right: 4px; }
.status > button:not(.on) { border: 1px solid #c8ccd0; background: #f8f8f8; }
.status > .vsep { margin-left: 5px; }
.msg { display: flex; align-items: center; gap: 5px; margin-left: 6px; white-space: nowrap; font-size: 11px; }
.bullet { width: 5px; height: 5px; border-radius: 50%; background: #0000ee; }
.tools { display: flex; align-items: center; margin-left: auto; }
.tools > svg { margin: 0 1px; }
.s2 { margin-left: 34px; }
.find { display: flex; align-items: center; justify-content: center; width: 40px; height: 22px; margin: 0 2px; border: 1px solid #d0d4d8; border-radius: 2px; }
.filter { appearance: none; width: 178px; height: 19px; margin-left: 96px; padding: 0 4px; border: 1px solid #c8ccd0; background: #fafafa; line-height: 16px; background-image: linear-gradient(#c8ccd0, #c8ccd0), linear-gradient(45deg, transparent 50%, #555 50%), linear-gradient(-45deg, transparent 50%, #555 50%); background-size: 1px 17px, 4px 4px, 4px 4px; background-position: right 14px top 0, right 7px top 7px, right 3px top 7px; background-repeat: no-repeat; border-radius: 0; }

/* forum mark over the lower right corner */
.brand { position: absolute; right: 3px; bottom: 3px; display: flex; width: 207px; height: 63px; background: rgba(252, 252, 252, .4); pointer-events: none; }
.brandtext { display: flex; flex-direction: column; align-items: center; margin-left: -2px; }
.brandtext strong { font-size: 29px; line-height: 40px; color: #a3d9b5; }
.brandtext span { font-size: 15px; line-height: 16px; color: #c0e2df; }
```
